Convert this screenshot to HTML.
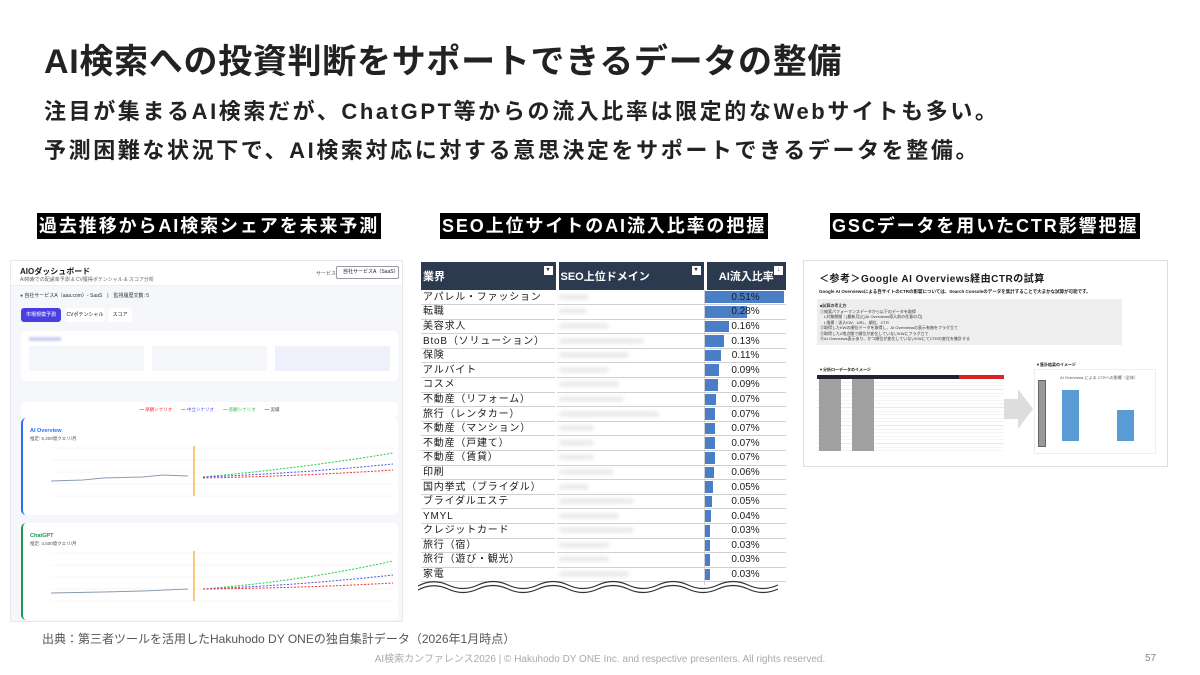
<!DOCTYPE html>
<html><head><meta charset="utf-8"><style>
*{margin:0;padding:0;box-sizing:border-box}
body{width:1200px;height:675px;background:#fff;position:relative;overflow:hidden;font-family:"Liberation Sans","Noto Sans CJK JP",sans-serif;color:#1a1a1a}
.a{position:absolute}
h1{position:absolute;left:44px;top:34px;font-size:34px;font-weight:bold;letter-spacing:0.7px;color:#222;white-space:nowrap}
.sub{position:absolute;left:44px;font-size:22px;font-weight:bold;white-space:nowrap;color:#222;letter-spacing:2.6px}
.lbl{position:absolute;top:213px;height:26px;background:#000;color:#fff;font-size:18px;font-weight:bold;line-height:26px;padding:0 2px;white-space:nowrap;letter-spacing:1.9px}
table{border-collapse:collapse}
.tb{position:absolute;left:421px;top:262px;width:365px;font-size:10px;letter-spacing:0.8px}
.tb td{height:14.6px;border-bottom:1px solid #d0d0d0;padding:0 2px;white-space:nowrap;position:relative;line-height:13px}
.tb th{background:#2b3a4e;color:#fff;height:28px;text-align:left;padding:0 2px;font-size:11px;border-right:3px solid #fff;position:relative;letter-spacing:0}
.blur{display:inline-block;height:6px;background:#ececec;border-radius:3px;filter:blur(1.5px)}
.bar{position:absolute;left:0;top:1px;bottom:1px;background:#4a7ec6}
.pc{position:relative;text-align:center;display:block;letter-spacing:0}
.dd{position:absolute;right:3px;top:4px;width:9px;height:9px;background:#fff;font-size:6px;color:#333;text-align:center;line-height:9px}
</style></head><body>
<h1>AI検索への投資判断をサポートできるデータの整備</h1>
<div class="sub" style="top:94px">注目が集まるAI検索だが、ChatGPT等からの流入比率は限定的なWebサイトも多い。</div>
<div class="sub" style="top:133px">予測困難な状況下で、AI検索対応に対する意思決定をサポートできるデータを整備。</div>
<div class="lbl" style="left:37px">過去推移からAI検索シェアを未来予測</div>
<div class="lbl" style="left:440px">SEO上位サイトのAI流入比率の把握</div>
<div class="lbl" style="left:830px">GSCデータを用いたCTR影響把握</div>

<!-- left dashboard -->
<div class="a" style="left:10px;top:260px;width:393px;height:362px;background:#f5f7fb;border:1px solid #e6e8ee;overflow:hidden">
 <div class="a" style="left:0;top:0;width:393px;height:25px;background:#fff;border-bottom:1px solid #eee"></div>
 <div class="a" style="left:9px;top:5px;font-size:8px;font-weight:bold">AIOダッシュボード</div>
 <div class="a" style="left:9px;top:15px;font-size:5px;color:#666;white-space:nowrap">AI検索での配慮率予測 & CV獲得ポテンシャル & スコア分析</div>
 <div class="a" style="left:305px;top:9px;font-size:5px;color:#555;white-space:nowrap">サービス</div>
 <div class="a" style="left:325px;top:5px;width:63px;height:13px;border:1px solid #99a;border-radius:2px;font-size:5px;line-height:11px;padding-left:6px;background:#fff;white-space:nowrap;overflow:hidden">自社サービスA（SaaS）　 ▾</div>
 <div class="a" style="left:9px;top:31px;font-size:5px;color:#333;white-space:nowrap"><span style="color:#4040e0">●</span> 自社サービスA（aaa.com）- SaaS　|　監視履歴文数: 5</div>
 <div class="a" style="left:10px;top:47px;width:40px;height:14px;background:#4a3fe0;border-radius:3px;color:#fff;font-size:5px;text-align:center;line-height:14px">市場規模予測</div>
 <div class="a" style="left:54px;top:47px;width:40px;height:14px;background:#fff;border-radius:3px;font-size:5px;text-align:center;line-height:14px">CVポテンシャル</div>
 <div class="a" style="left:97px;top:47px;width:24px;height:14px;background:#fff;border-radius:3px;font-size:5px;text-align:center;line-height:14px">スコア</div>
 <div class="a" style="left:10px;top:70px;width:377px;height:50px;background:#fff;border-radius:5px">
  <div class="a" style="left:8px;top:6px;width:32px;height:4px;background:#cdd0f5;filter:blur(1px)"></div>
  <div class="a" style="left:8px;top:15px;width:115px;height:25px;background:#f5f6f9"></div>
  <div class="a" style="left:131px;top:15px;width:115px;height:25px;background:#f5f6f9"></div>
  <div class="a" style="left:254px;top:15px;width:115px;height:25px;background:#eef0fb"></div>
 </div>
 <div class="a" style="left:10px;top:141px;width:377px;height:16px;background:#fff;border-radius:5px;font-size:4.5px;line-height:16px;text-align:center;color:#555;white-space:nowrap"><span style="color:#e33">━ 楽観シナリオ</span>　　<span style="color:#55e">━ 中立シナリオ</span>　　<span style="color:#3b5">━ 悲観シナリオ</span>　　━ 実績</div>
 <div class="a" style="left:10px;top:157px;width:377px;height:97px;background:#fff;border-radius:5px;border-left:2px solid #2a6ff0">
  <div class="a" style="left:7px;top:10px;font-size:5.5px;color:#2a6ff0;font-weight:bold">AI Overview</div>
  <div class="a" style="left:7px;top:18px;font-size:4.5px;color:#555;white-space:nowrap">推定: 6,200億クエリ/月</div>
  <svg class="a" style="left:20px;top:28px" width="355" height="60"><g stroke="#eee" stroke-width="0.5"><line x1="8" y1="2" x2="350" y2="2"/><line x1="8" y1="14" x2="350" y2="14"/><line x1="8" y1="26" x2="350" y2="26"/><line x1="8" y1="38" x2="350" y2="38"/><line x1="8" y1="50" x2="350" y2="50"/></g>
  <polyline points="8,35 40,34 60,32 100,31 120,29 145,30" fill="none" stroke="#8a9ab0" stroke-width="1"/>
  <line x1="151" y1="0" x2="151" y2="50" stroke="#f5a623" stroke-width="1.2"/>
  <path d="M160,31 Q260,22 350,7" fill="none" stroke="#2c4" stroke-width="1" stroke-dasharray="2,1.5"/>
  <path d="M160,31 Q260,27 350,18" fill="none" stroke="#55e" stroke-width="1" stroke-dasharray="2,1.5"/>
  <path d="M160,32 Q260,30 350,24" fill="none" stroke="#e33" stroke-width="1" stroke-dasharray="2,1.5"/></svg>
 </div>
 <div class="a" style="left:10px;top:262px;width:377px;height:97px;background:#fff;border-radius:5px;border-left:2px solid #1a9a50">
  <div class="a" style="left:7px;top:10px;font-size:5.5px;color:#1a9a50;font-weight:bold">ChatGPT</div>
  <div class="a" style="left:7px;top:18px;font-size:4.5px;color:#555;white-space:nowrap">推定: 4,500億クエリ/月</div>
  <svg class="a" style="left:20px;top:28px" width="355" height="60"><g stroke="#eee" stroke-width="0.5"><line x1="8" y1="2" x2="350" y2="2"/><line x1="8" y1="14" x2="350" y2="14"/><line x1="8" y1="26" x2="350" y2="26"/><line x1="8" y1="38" x2="350" y2="38"/><line x1="8" y1="50" x2="350" y2="50"/></g>
  <polyline points="8,42 60,41 100,40 145,38" fill="none" stroke="#8a9ab0" stroke-width="1"/>
  <line x1="151" y1="0" x2="151" y2="50" stroke="#f5a623" stroke-width="1.2"/>
  <path d="M160,38 Q260,30 350,10" fill="none" stroke="#2c4" stroke-width="1" stroke-dasharray="2,1.5"/>
  <path d="M160,38 Q260,34 350,24" fill="none" stroke="#55e" stroke-width="1" stroke-dasharray="2,1.5"/>
  <path d="M160,38 Q260,37 350,32" fill="none" stroke="#e33" stroke-width="1" stroke-dasharray="2,1.5"/></svg>
 </div>
</div>

<!-- table -->
<table class="tb">
<tr><th style="width:136px">業界<span class="dd">▾</span></th><th style="width:148px">SEO上位ドメイン<span class="dd">▾</span></th><th style="width:81px;text-align:center;border-right:0">AI流入比率<span class="dd">↓</span></th></tr>
<tr><td>アパレル・ファッション</td><td><span class="blur" style="width:30px"></span></td><td><div class="bar" style="width:79px"></div><span class="pc">0.51%</span></td></tr>
<tr><td>転職</td><td><span class="blur" style="width:28px"></span></td><td><div class="bar" style="width:42px"></div><span class="pc">0.28%</span></td></tr>
<tr><td>美容求人</td><td><span class="blur" style="width:50px"></span></td><td><div class="bar" style="width:24px"></div><span class="pc">0.16%</span></td></tr>
<tr><td>BtoB（ソリューション）</td><td><span class="blur" style="width:85px"></span></td><td><div class="bar" style="width:19px"></div><span class="pc">0.13%</span></td></tr>
<tr><td>保険</td><td><span class="blur" style="width:70px"></span></td><td><div class="bar" style="width:16px"></div><span class="pc">0.11%</span></td></tr>
<tr><td>アルバイト</td><td><span class="blur" style="width:50px"></span></td><td><div class="bar" style="width:14px"></div><span class="pc">0.09%</span></td></tr>
<tr><td>コスメ</td><td><span class="blur" style="width:60px"></span></td><td><div class="bar" style="width:13px"></div><span class="pc">0.09%</span></td></tr>
<tr><td>不動産（リフォーム）</td><td><span class="blur" style="width:65px"></span></td><td><div class="bar" style="width:11px"></div><span class="pc">0.07%</span></td></tr>
<tr><td>旅行（レンタカー）</td><td><span class="blur" style="width:100px"></span></td><td><div class="bar" style="width:10px"></div><span class="pc">0.07%</span></td></tr>
<tr><td>不動産（マンション）</td><td><span class="blur" style="width:35px"></span></td><td><div class="bar" style="width:10px"></div><span class="pc">0.07%</span></td></tr>
<tr><td>不動産（戸建て）</td><td><span class="blur" style="width:35px"></span></td><td><div class="bar" style="width:10px"></div><span class="pc">0.07%</span></td></tr>
<tr><td>不動産（賃貸）</td><td><span class="blur" style="width:35px"></span></td><td><div class="bar" style="width:10px"></div><span class="pc">0.07%</span></td></tr>
<tr><td>印刷</td><td><span class="blur" style="width:55px"></span></td><td><div class="bar" style="width:9px"></div><span class="pc">0.06%</span></td></tr>
<tr><td>国内挙式（ブライダル）</td><td><span class="blur" style="width:30px"></span></td><td><div class="bar" style="width:8px"></div><span class="pc">0.05%</span></td></tr>
<tr><td>ブライダルエステ</td><td><span class="blur" style="width:75px"></span></td><td><div class="bar" style="width:7px"></div><span class="pc">0.05%</span></td></tr>
<tr><td>YMYL</td><td><span class="blur" style="width:60px"></span></td><td><div class="bar" style="width:6px"></div><span class="pc">0.04%</span></td></tr>
<tr><td>クレジットカード</td><td><span class="blur" style="width:75px"></span></td><td><div class="bar" style="width:5px"></div><span class="pc">0.03%</span></td></tr>
<tr><td>旅行（宿）</td><td><span class="blur" style="width:50px"></span></td><td><div class="bar" style="width:5px"></div><span class="pc">0.03%</span></td></tr>
<tr><td>旅行（遊び・観光）</td><td><span class="blur" style="width:50px"></span></td><td><div class="bar" style="width:5px"></div><span class="pc">0.03%</span></td></tr>
<tr><td>家電</td><td><span class="blur" style="width:70px"></span></td><td><div class="bar" style="width:5px"></div><span class="pc">0.03%</span></td></tr>
</table>
<div class="a" style="left:555px;top:290px;width:2px;height:295px;background:#fff"></div>
<div class="a" style="left:704px;top:290px;width:1px;height:295px;background:#d0d0d0"></div>
<svg class="a" style="left:418px;top:578px" width="372" height="20"><path d="M0,10 Q15,0 30,8 T60,8 T90,8 T120,8 T150,8 T180,8 T210,8 T240,8 T270,8 T300,8 T330,8 T360,8 L372,6 L372,20 L0,20Z" fill="#fff"/><path d="M0,8 Q15,0 30,7 T60,7 T90,7 T120,7 T150,7 T180,7 T210,7 T240,7 T270,7 T300,7 T330,7 T360,7" fill="none" stroke="#333" stroke-width="1.2"/><path d="M0,12 Q15,4 30,11 T60,11 T90,11 T120,11 T150,11 T180,11 T210,11 T240,11 T270,11 T300,11 T330,11 T360,11" fill="none" stroke="#333" stroke-width="1.2"/></svg>

<!-- right slide -->
<div class="a" style="left:803px;top:260px;width:365px;height:207px;background:#fff;border:1px solid #ddd">
 <div class="a" style="left:15px;top:9px;font-size:10px;font-weight:bold;letter-spacing:0.5px;white-space:nowrap">＜参考＞Google AI Overviews経由CTRの試算</div>
 <div class="a" style="left:15px;top:28px;font-size:4.5px;font-weight:bold;white-space:nowrap">Google AI Overviewsによる自サイトのCTRの影響については、Search Consoleのデータを集計することで大まかな試算が可能です。</div>
 <div class="a" style="left:13px;top:38px;width:305px;height:46px;background:#eee;font-size:4px;line-height:5.5px;padding:4px 3px;color:#333;white-space:nowrap">
 <b>■試算の考え方</b><br>①検索パフォーマンスデータから以下のデータを取得<br>　L対象期間：[最新月]と[AI Overviews導入前の任意の月]<br>　L指標：流入KW、URL、順位、CTR<br>②取得したKWの順位データを取得し、AI Overviewsの表示有無をフラグ立て<br>③取得した2地点間で順位が変化していないKWにフラグ立て<br>④AI Overviews表示あり、かつ順位が変化していないKWにてCTRの変化を集計する</div>
 <div class="a" style="left:15px;top:106px;font-size:4px;font-weight:bold;white-space:nowrap">▼分析ローデータのイメージ</div>
 <div class="a" style="left:13px;top:114px;width:187px;height:4px;background:#223"></div>
 <div class="a" style="left:155px;top:114px;width:45px;height:4px;background:#d22"></div>
 <div class="a" style="left:13px;top:118px;width:187px;height:72px;background:repeating-linear-gradient(#fff 0 3px,#e8e8e8 3px 3.6px)"></div>
 <div class="a" style="left:15px;top:118px;width:22px;height:72px;background:#a0a0a0"></div>
 <div class="a" style="left:48px;top:118px;width:22px;height:72px;background:#a0a0a0"></div>
 <svg class="a" style="left:200px;top:128px" width="30" height="40"><path d="M0,10 H14 V0 L29,20 L14,40 V30 H0Z" fill="#ddd"/></svg>
 <div class="a" style="left:232px;top:101px;font-size:4px;font-weight:bold;white-space:nowrap">▼集計結果のイメージ</div>
 <div class="a" style="left:230px;top:108px;width:122px;height:85px;border:1px solid #eee">
  <div class="a" style="left:25px;top:5px;font-size:4px;color:#555;white-space:nowrap">AI Overviews による CTRへの影響（全体）</div>
  <div class="a" style="left:3px;top:10px;width:8px;height:67px;background:#999;border:1px solid #666"></div>
  <div class="a" style="left:27px;top:20px;width:17px;height:51px;background:#5b9bd5"></div>
  <div class="a" style="left:82px;top:40px;width:17px;height:31px;background:#5b9bd5"></div>
 </div>
</div>

<div class="a" style="left:42px;top:630px;font-size:12px;color:#555;white-space:nowrap">出典：第三者ツールを活用したHakuhodo DY ONEの独自集計データ（2026年1月時点）</div>
<div class="a" style="left:0;width:1200px;top:650px;text-align:center;font-size:10px;color:#aaa;white-space:nowrap">AI検索カンファレンス2026 | © Hakuhodo DY ONE Inc. and respective presenters. All rights reserved.</div>
<div class="a" style="left:1145px;top:653px;font-size:10px;color:#888">57</div>
</body></html>
